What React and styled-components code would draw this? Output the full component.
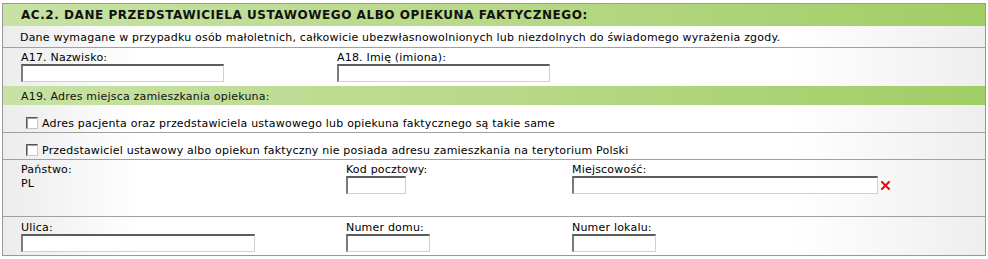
import React from 'react';
import styled, { createGlobalStyle } from 'styled-components';

const GlobalStyle = createGlobalStyle`
  body {
    margin: 0;
    padding: 3px 2px 0 2px;
    background: #ffffff;
    font-family: 'DejaVu Sans', Verdana, sans-serif;
    font-size: 11px;
    letter-spacing: 0.2px;
    color: #000000;
  }
`;

const Panel = styled.div`
  width: 984px;
  box-sizing: border-box;
  border: 1px solid #999999;
`;

const Band = styled.div`
  height: ${p => p.h}px;
  box-sizing: border-box;
  display: flex;
  align-items: center;
  padding-left: 18px;
  padding-top: ${p => p.pt || 0}px;
  background: linear-gradient(to right, #c7e2a4 0%, #b6d886 55%, #a1cd65 100%);
  font-weight: ${p => (p.bold ? 700 : 400)};
  font-size: ${p => (p.bold ? 12 : 11)}px;
  letter-spacing: ${p => (p.bold ? 0.55 : 0.2)}px;
  color: #111111;
`;

const Row = styled.div`
  box-sizing: border-box;
  border-top: ${p => (p.noLine ? 'none' : '1px solid #a0a0a0')};
  background: linear-gradient(to right, #ececec 0%, #ffffff 14%, #ffffff 80%, #eeeeee 100%);
  padding: ${p => p.pad || '3px 0 4px 18px'};
  min-height: ${p => p.h || 0}px;
`;

const Fields = styled.div`
  display: grid;
  grid-template-columns: ${p => p.cols};
  align-items: start;
`;

const Field = styled.div`
  display: flex;
  flex-direction: column;
`;

const Label = styled.label`
  line-height: 13px;
  height: 13px;
  white-space: nowrap;
`;

const Value = styled.div`
  line-height: 13px;
  margin-top: 1px;
`;

const InputLine = styled.div`
  display: flex;
  align-items: center;
  gap: 3px;
`;

const Input = styled.input`
  box-sizing: border-box;
  width: ${p => p.w}px;
  height: 18px;
  margin: 0;
  padding: 0 2px;
  background: #ffffff;
  border-style: solid;
  border-width: 2px 1px 1px 2px;
  border-color: #5c5c5c #d4d0c8 #d4d0c8 #7a7a7a;
  font-family: inherit;
  font-size: 11px;
  outline: none;
`;

const CheckRow = styled.div`
  display: flex;
  align-items: flex-end;
  gap: 4px;
  height: 18px;
  padding-left: 5px;
`;

const Box = styled.span`
  display: inline-block;
  width: 12px;
  height: 12px;
  box-sizing: border-box;
  background: #ffffff;
  border-style: solid;
  border-width: 1px;
  border-color: #555555 #c8c8c8 #c8c8c8 #555555;
  box-shadow: inset 1px 1px 0 #a0a0a0;
  margin-bottom: 1px;
`;

const CheckText = styled.span`
  line-height: 13px;
`;

const ErrorMark = () => (
  <svg width="9" height="9" viewBox="0 0 9 9">
    <path d="M1 1 L8 8 M8 1 L1 8" stroke="#ff0000" strokeWidth="2" strokeLinecap="square" />
  </svg>
);

export default function App() {
  return (
    <>
      <GlobalStyle />
      <Panel>
        <Band h={22} bold>AC.2. DANE PRZEDSTAWICIELA USTAWOWEGO ALBO OPIEKUNA FAKTYCZNEGO:</Band>
        <Row noLine pad="5px 0 3px 17px" h={21}>
          Dane wymagane w przypadku osób małoletnich, całkowicie ubezwłasnowolnionych lub niezdolnych do świadomego wyrażenia zgody.
        </Row>
        <Row h={38}>
          <Fields cols="316px 1fr">
            <Field>
              <Label>A17. Nazwisko:</Label>
              <Input w={203} />
            </Field>
            <Field>
              <Label>A18. Imię (imiona):</Label>
              <Input w={213} />
            </Field>
          </Fields>
        </Row>
        <Band h={19} pt={2}>A19. Adres miejsca zamieszkania opiekuna:</Band>
        <Row noLine pad="7px 0 0 18px" h={27}>
          <CheckRow>
            <Box />
            <CheckText>Adres pacjenta oraz przedstawiciela ustawowego lub opiekuna faktycznego są takie same</CheckText>
          </CheckRow>
        </Row>
        <Row pad="6px 0 0 18px" h={27}>
          <CheckRow>
            <Box />
            <CheckText>Przedstawiciel ustawowy albo opiekun faktyczny nie posiada adresu zamieszkania na terytorium Polski</CheckText>
          </CheckRow>
        </Row>
        <Row h={57}>
          <Fields cols="325px 226px 1fr">
            <Field>
              <Label>Państwo:</Label>
              <Value>PL</Value>
            </Field>
            <Field>
              <Label>Kod pocztowy:</Label>
              <Input w={60} />
            </Field>
            <Field>
              <Label>Miejscowość:</Label>
              <InputLine>
                <Input w={306} />
                <ErrorMark />
              </InputLine>
            </Field>
          </Fields>
        </Row>
        <Row pad="4px 0 3px 18px" h={39}>
          <Fields cols="325px 226px 1fr">
            <Field>
              <Label>Ulica:</Label>
              <Input w={234} />
            </Field>
            <Field>
              <Label>Numer domu:</Label>
              <Input w={84} />
            </Field>
            <Field>
              <Label>Numer lokalu:</Label>
              <Input w={84} />
            </Field>
          </Fields>
        </Row>
      </Panel>
    </>
  );
}
